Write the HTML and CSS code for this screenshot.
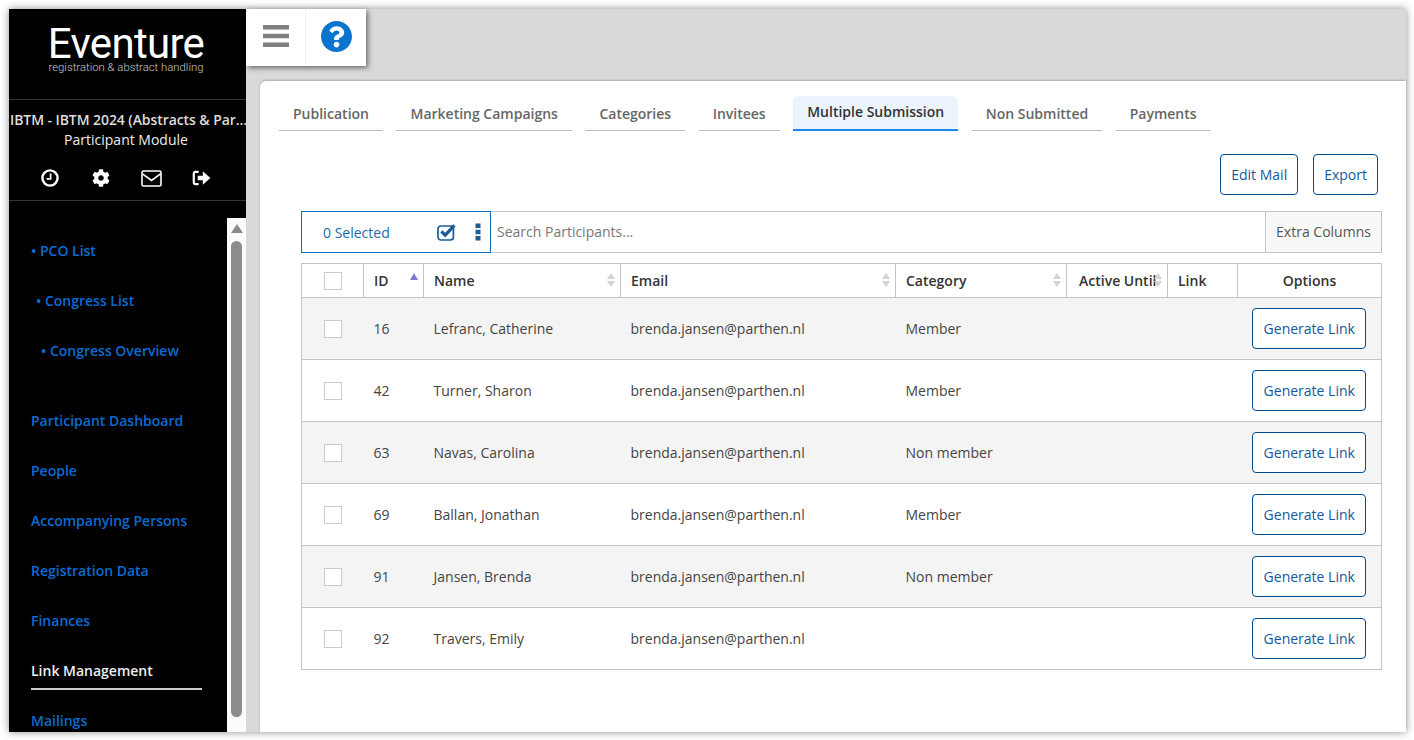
FILE: index.html
```html
<!DOCTYPE html>
<html lang="en">
<head>
  <meta charset="UTF-8">
  <title>Eventure - Link Management</title>
  <link rel="stylesheet" href="styles.css">
</head>
<body>

<div class="app">

  <div class="sidebar">
    <div class="logo">
      <div class="logo-name">Eventure</div>
      <div class="logo-sub">registration &amp; abstract handling</div>
    </div>

    <div class="congress">
      <div class="congress-title">IBTM - IBTM 2024 (Abstracts &amp; Par…</div>
      <div class="congress-module">Participant Module</div>
      <div class="congress-icons">
        <svg width="18" height="18" viewBox="0 0 18 18"><circle cx="9" cy="9" r="7.6" fill="none" stroke="#fff" stroke-width="2.4"/><path d="M9.6 4.6v5.2H5.6" fill="none" stroke="#fff" stroke-width="1.7"/></svg>
        <svg width="18" height="18" viewBox="0 0 512 512"><path fill="#fff" d="M487.4 315.7l-42.6-24.6c4.3-23.2 4.3-47 0-70.2l42.6-24.6c4.9-2.8 7.1-8.6 5.5-14-11.1-35.6-30-67.8-54.7-94.6-3.8-4.1-10-5.1-14.8-2.3L380.8 110c-17.9-15.4-38.5-27.3-60.8-35.1V25.8c0-5.6-3.9-10.5-9.4-11.7-36.7-8.2-74.3-7.8-109.2 0-5.5 1.2-9.4 6.1-9.4 11.7V75c-22.2 7.9-42.8 19.8-60.8 35.1L88.7 85.5c-4.9-2.8-11-1.9-14.8 2.3-24.7 26.7-43.6 58.9-54.7 94.6-1.7 5.4.6 11.2 5.5 14L67.3 221c-4.3 23.2-4.3 47 0 70.2l-42.6 24.6c-4.9 2.8-7.1 8.6-5.5 14 11.1 35.6 30 67.8 54.7 94.6 3.8 4.1 10 5.1 14.8 2.3l42.6-24.6c17.9 15.4 38.5 27.3 60.8 35.1v49.2c0 5.6 3.9 10.5 9.4 11.7 36.7 8.2 74.3 7.8 109.2 0 5.5-1.2 9.4-6.1 9.4-11.7v-49.2c22.2-7.9 42.8-19.8 60.8-35.1l42.6 24.6c4.9 2.8 11 1.9 14.8-2.3 24.7-26.7 43.6-58.9 54.7-94.6 1.5-5.5-.7-11.3-5.6-14.1zM256 336c-44.1 0-80-35.9-80-80s35.9-80 80-80 80 35.9 80 80-35.9 80-80 80z"/></svg>
        <svg width="21" height="17" viewBox="0 0 21 17"><rect x="1" y="1" width="19" height="15" rx="1.6" fill="none" stroke="#fff" stroke-width="1.6"/><path d="M1.5 3.8l9 6.6 9-6.6" fill="none" stroke="#fff" stroke-width="1.6"/></svg>
        <svg width="19" height="16" viewBox="0 0 20 17"><path d="M7 2H3.6A1.8 1.8 0 0 0 1.8 3.8v9.4A1.8 1.8 0 0 0 3.6 15H7" fill="none" stroke="#fff" stroke-width="2.3"/><path fill="#fff" d="M6 6h5.4V1.4L19.4 8.5l-8 7.1V11H6z"/></svg>
      </div>
    </div>

    <div class="nav-wrap">
      <div class="nav">
        <a class="nav-item">• PCO List</a>
        <a class="nav-item nav-sub">• Congress List</a>
        <a class="nav-item nav-sub2">• Congress Overview</a>
        <div class="nav-gap"></div>
        <a class="nav-item">Participant Dashboard</a>
        <a class="nav-item">People</a>
        <a class="nav-item">Accompanying Persons</a>
        <a class="nav-item">Registration Data</a>
        <a class="nav-item">Finances</a>
        <a class="nav-item active">Link Management</a>
        <a class="nav-item">Mailings</a>
      </div>
      <div class="scrollbar">
        <div class="scroll-arrow"></div>
        <div class="scroll-thumb"></div>
      </div>
    </div>
  </div>

  <div class="main">
    <div class="topbar">
      <div class="topbar-btn">
        <svg width="26" height="22" viewBox="0 0 26 22"><path fill="#7f7f7f" d="M0 0h26v4.4H0zM0 8.8h26v4.4H0zM0 17.6h26V22H0z"/></svg>
      </div>
      <div class="topbar-btn">
        <svg width="31" height="31" viewBox="8 8 496 496"><path fill="#0a75cf" d="M504 256c0 136.997-111.043 248-248 248S8 392.997 8 256C8 119.083 119.043 8 256 8s248 111.083 248 248zM262.655 90c-54.497 0-89.255 22.957-116.549 63.758-3.536 5.286-2.353 12.415 2.715 16.258l34.699 26.31c5.205 3.947 12.621 3.008 16.665-2.122 17.864-22.658 30.113-35.797 57.303-35.797 20.429 0 45.698 13.148 45.698 32.958 0 14.976-12.363 22.667-32.534 33.976C247.128 238.528 216 254.941 216 296v4c0 6.627 5.373 12 12 12h56c6.627 0 12-5.373 12-12v-1.333c0-28.462 83.186-29.647 83.186-106.667 0-58.002-60.165-102-116.531-102zM256 338c-25.365 0-46 20.635-46 46 0 25.364 20.635 46 46 46s46-20.636 46-46c0-25.365-20.635-46-46-46z"/></svg>
      </div>
    </div>

    <div class="content">
      <div class="tabs">
        <div class="tab">Publication</div>
        <div class="tab">Marketing Campaigns</div>
        <div class="tab">Categories</div>
        <div class="tab">Invitees</div>
        <div class="tab tab-active">Multiple Submission</div>
        <div class="tab">Non Submitted</div>
        <div class="tab">Payments</div>
      </div>

      <div class="actions">
        <button class="btn">Edit Mail</button>
        <button class="btn">Export</button>
      </div>

      <div class="filter-bar">
        <div class="selected-box">
          <span class="selected-text">0 Selected</span>
          <svg class="selected-check" width="19" height="18" viewBox="0 0 19 18"><rect x="1" y="3" width="15.4" height="14" rx="3" fill="none" stroke="#1b5c96" stroke-width="1.7"/><path d="M4.4 8.4l3.8 3.8L17.4 2.4" fill="none" stroke="#1b5c96" stroke-width="3.2"/></svg>
          <svg width="6" height="18" viewBox="0 0 6 18"><path fill="#1b5c96" d="M.5.5h5v4.6h-5zM.5 6.7h5v4.6h-5zM.5 12.9h5v4.6h-5z"/></svg>
        </div>
        <div class="search">Search Participants...</div>
        <div class="extra">Extra Columns</div>
      </div>

      <table class="grid">
        <colgroup>
          <col class="c-check"><col class="c-id"><col class="c-name"><col class="c-email"><col class="c-cat"><col class="c-active"><col class="c-link"><col class="c-opt">
        </colgroup>
        <thead>
          <tr>
            <th><span class="check"></span></th>
            <th class="sortable">ID<span class="sort-asc"></span></th>
            <th class="sortable">Name<span class="sort"></span></th>
            <th class="sortable">Email<span class="sort"></span></th>
            <th class="sortable">Category<span class="sort"></span></th>
            <th class="sortable th-active">Active Until<span class="sort"></span></th>
            <th>Link</th>
            <th class="center">Options</th>
          </tr>
        </thead>
        <tbody>
          <tr><td><span class="check"></span></td><td>16</td><td>Lefranc, Catherine</td><td>brenda.jansen@parthen.nl</td><td>Member</td><td></td><td></td><td class="center"><button class="btn btn-row">Generate Link</button></td></tr>
          <tr><td><span class="check"></span></td><td>42</td><td>Turner, Sharon</td><td>brenda.jansen@parthen.nl</td><td>Member</td><td></td><td></td><td class="center"><button class="btn btn-row">Generate Link</button></td></tr>
          <tr><td><span class="check"></span></td><td>63</td><td>Navas, Carolina</td><td>brenda.jansen@parthen.nl</td><td>Non member</td><td></td><td></td><td class="center"><button class="btn btn-row">Generate Link</button></td></tr>
          <tr><td><span class="check"></span></td><td>69</td><td>Ballan, Jonathan</td><td>brenda.jansen@parthen.nl</td><td>Member</td><td></td><td></td><td class="center"><button class="btn btn-row">Generate Link</button></td></tr>
          <tr><td><span class="check"></span></td><td>91</td><td>Jansen, Brenda</td><td>brenda.jansen@parthen.nl</td><td>Non member</td><td></td><td></td><td class="center"><button class="btn btn-row">Generate Link</button></td></tr>
          <tr><td><span class="check"></span></td><td>92</td><td>Travers, Emily</td><td>brenda.jansen@parthen.nl</td><td></td><td></td><td></td><td class="center"><button class="btn btn-row">Generate Link</button></td></tr>
        </tbody>
      </table>
    </div>
  </div>

</div>

</body>
</html>
```

FILE: styles.css
```css
html, body {
  height: 100%;
}

body {
  margin: 0;
  padding: 9px 8px 8px 9px;
  box-sizing: border-box;
  overflow: hidden;
  background-color: #fff;
  font-family: "Open Sans", sans-serif;
  font-size: 14px;
  color: #333;
}

.app {
  display: flex;
  height: 723px;
  box-shadow: 0 0 8px rgba(0, 0, 0, 0.45);
}

/* sidebar */

.sidebar {
  width: 237px;
  flex-shrink: 0;
  display: flex;
  flex-direction: column;
  background-color: #000;
  color: #fff;
  overflow: hidden;
}

.logo {
  height: 91px;
  box-sizing: border-box;
  padding: 18px 3px 0 0;
  border-bottom: 1px solid #333;
  text-align: center;
}

.logo-name {
  font-family: Roboto, sans-serif;
  font-size: 42px;
  line-height: 34px;
  letter-spacing: -0.7px;
}

.logo-sub {
  margin-top: 1px;
  font-family: Roboto, sans-serif;
  font-weight: 300;
  font-size: 11.35px;
  line-height: 10px;
  color: #ccc;
}

.congress {
  height: 101px;
  box-sizing: border-box;
  padding-top: 10px;
  border-bottom: 1px solid #333;
  text-align: center;
}

.congress-title {
  padding-left: 1px;
  font-weight: 600;
  line-height: 20px;
  letter-spacing: -0.08px;
  white-space: nowrap;
  text-align: left;
  color: #ddd;
}

.congress-module {
  padding-right: 3px;
  line-height: 20px;
  color: #eee;
}

.congress-icons {
  display: grid;
  grid-template-columns: repeat(4, 50.5px);
  justify-items: center;
  align-items: center;
  height: 20px;
  margin-top: 18px;
  padding-left: 16px;
}

.nav-wrap {
  flex: 1;
  position: relative;
  overflow: hidden;
}

.nav {
  padding-top: 25px;
}

.nav-item {
  display: block;
  height: 50px;
  padding-left: 22px;
  line-height: 50px;
  font-weight: 600;
  color: #0a6cd2;
}

.nav-sub {
  padding-left: 27px;
}

.nav-sub2 {
  padding-left: 32px;
}

.nav-gap {
  height: 20px;
}

.nav-item.active {
  position: relative;
  color: #eee;
}

.nav-item.active::after {
  content: "";
  position: absolute;
  left: 22px;
  bottom: 6px;
  width: 171px;
  height: 2px;
  background-color: #ccc;
}

.scrollbar {
  position: absolute;
  top: 17px;
  right: 0;
  bottom: 0;
  width: 19px;
  background-color: #fbfbfb;
}

.scroll-arrow {
  width: 0;
  height: 0;
  margin: 6px auto 0;
  border-left: 6.5px solid transparent;
  border-right: 6.5px solid transparent;
  border-bottom: 9px solid #8c8c8c;
}

.scroll-thumb {
  width: 11px;
  height: 476px;
  margin: 8px 0 0 4px;
  border-radius: 6px;
  background-color: #8c8c8c;
}

/* main */

.main {
  flex: 1;
  min-width: 0;
  display: flex;
  flex-direction: column;
  background-color: #d9d9d9;
}

.topbar {
  display: flex;
  align-self: flex-start;
  height: 57px;
  background-color: #fff;
  box-shadow: 2px 2px 5px rgba(0, 0, 0, 0.5);
  position: relative;
}

.topbar-btn {
  display: flex;
  align-items: center;
  justify-content: center;
  width: 59px;
  box-sizing: border-box;
  padding-bottom: 3px;
}

.topbar-btn + .topbar-btn {
  width: 61px;
  border-left: 1px solid #f0f0f0;
}

.content {
  flex: 1;
  margin: 15px 0 0 14px;
  padding: 15px 24px 0 19px;
  background-color: #fff;
  border-top-left-radius: 6px;
  box-shadow: 0 -1px 2px rgba(0, 0, 0, 0.2);
}

/* tabs */

.tabs {
  display: flex;
  align-items: flex-end;
  gap: 13.5px;
}

.tab {
  height: 35px;
  padding: 0 14px;
  box-sizing: border-box;
  border-bottom: 1px solid #bbb;
  line-height: 36px;
  font-weight: 600;
  color: #666;
}

.tab-active {
  border-bottom: 2px solid #1e88e5;
  border-radius: 6px 6px 0 0;
  background-color: #ebf4fd;
  line-height: 32px;
  color: #333;
}

.actions {
  display: flex;
  justify-content: flex-end;
  gap: 15px;
  margin-top: 23px;
  padding-right: 4px;
}

.btn {
  height: 41px;
  padding: 0 10px;
  border: 1px solid #004a8f;
  border-radius: 4px;
  background-color: #fff;
  font-family: "Open Sans", sans-serif;
  font-size: 14px;
  color: #13599b;
}

.btn-row {
  width: 114px;
  padding: 0;
  vertical-align: middle;
}

/* filter bar */

.filter-bar {
  display: flex;
  height: 42px;
  margin: 16px 0 0 22px;
  box-sizing: border-box;
  border: 1px solid #c4c4c4;
  border-left: none;
}

.selected-box {
  display: flex;
  align-items: center;
  width: 190px;
  height: 42px;
  margin-top: -1px;
  padding: 0 9px 0 21px;
  box-sizing: border-box;
  border: 1px solid #0a6ebd;
  color: #1b6aa8;
}

.selected-text {
  flex: 1;
}

.selected-check {
  margin-right: 19px;
}

.search {
  flex: 1;
  padding-left: 6px;
  line-height: 40px;
  color: #777;
}

.extra {
  width: 116px;
  box-sizing: border-box;
  border-left: 1px solid #c4c4c4;
  background-color: #f8f8f8;
  text-align: center;
  line-height: 40px;
  color: #555;
}

/* table */

.grid {
  width: 1080px;
  margin: 10px 0 0 22px;
  border-collapse: collapse;
  table-layout: fixed;
}

.c-check { width: 62px; }
.c-id { width: 60px; }
.c-name { width: 197px; }
.c-email { width: 275px; }
.c-cat { width: 171px; }
.c-active { width: 101px; }
.c-link { width: 70px; }
.c-opt { width: 144px; }

.grid th {
  height: 34px;
  padding: 0 10px;
  box-sizing: border-box;
  border: 1px solid #c4c4c4;
  text-align: left;
  font-weight: 600;
  white-space: nowrap;
  color: #333;
}

.grid th:first-child,
.grid td:first-child {
  padding: 0 0 0 22px;
}

.grid .th-active {
  padding-left: 12px;
}

.grid td {
  height: 62px;
  padding: 0 10px;
  box-sizing: border-box;
  border-top: 1px solid #c4c4c4;
  border-bottom: 1px solid #c4c4c4;
  color: #444;
}

.grid td:first-child {
  border-left: 1px solid #c4c4c4;
}

.grid td:last-child {
  border-right: 1px solid #c4c4c4;
}

.grid tbody tr:nth-child(odd) {
  background-color: #f4f4f4;
}

.grid .center {
  padding: 0;
  text-align: center;
}

.check {
  display: block;
  width: 18px;
  height: 18px;
  box-sizing: border-box;
  border: 1px solid #ccc;
  background-color: #fff;
}

.sortable {
  position: relative;
}

.sort, .sort-asc {
  position: absolute;
  top: 9px;
  right: 5px;
  width: 0;
  height: 0;
  border-left: 4px solid transparent;
  border-right: 4px solid transparent;
}

.sort {
  border-bottom: 6px solid #d4d4d4;
}

.sort::after {
  content: "";
  position: absolute;
  top: 8px;
  left: -4px;
  width: 0;
  height: 0;
  border-left: 4px solid transparent;
  border-right: 4px solid transparent;
  border-top: 6px solid #d4d4d4;
}

.sort-asc {
  border-left-width: 4.5px;
  border-right-width: 4.5px;
  border-bottom: 7px solid #7a7ad6;
}
```
